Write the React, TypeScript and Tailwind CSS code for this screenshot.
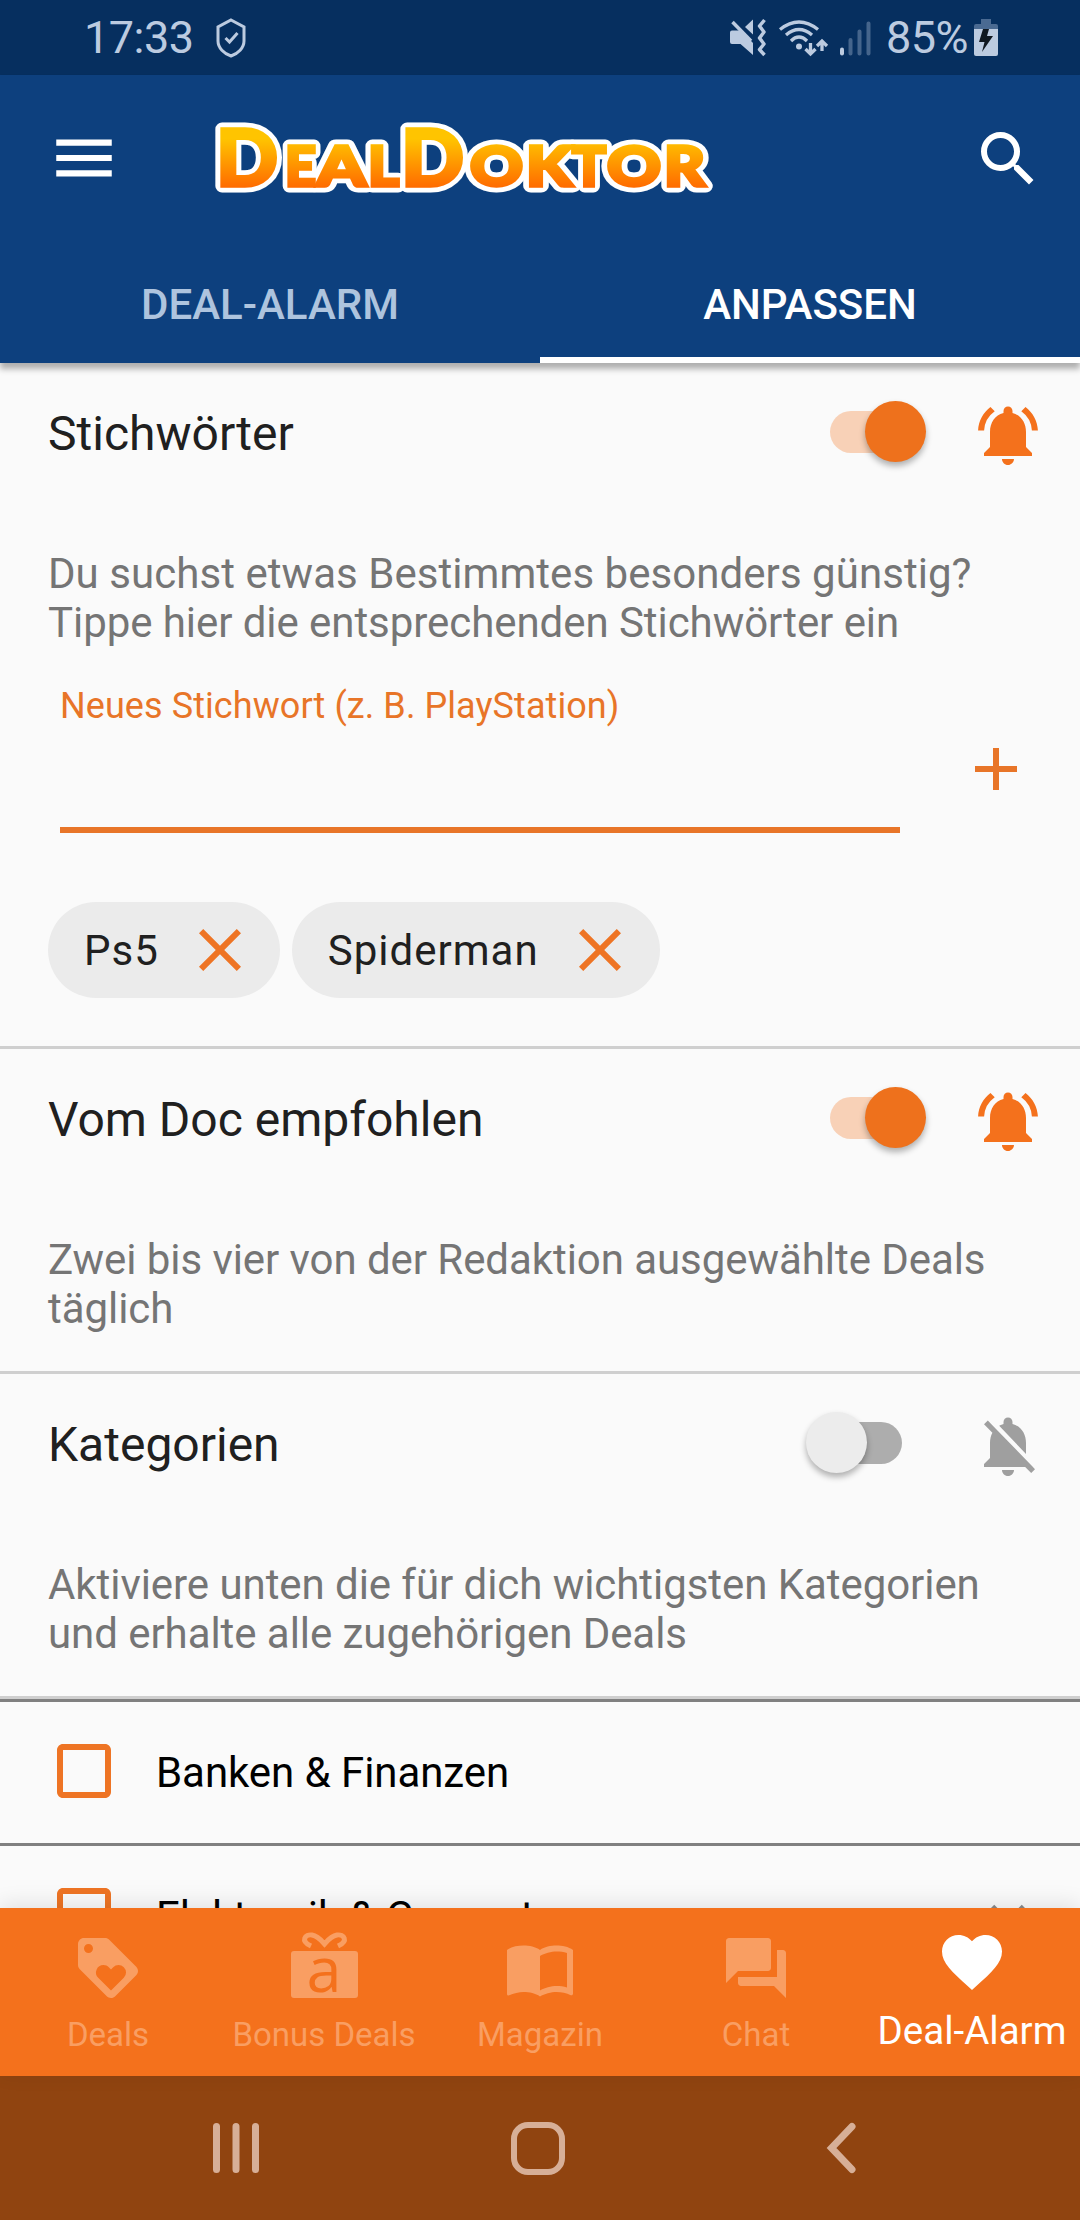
import { useState, type ReactNode } from "react"
import {
  MdAdd,
  MdCheckBoxOutlineBlank,
  MdClose,
  MdExpandMore,
  MdFavorite,
  MdLoyalty,
  MdMenu,
  MdNotificationsActive,
  MdNotificationsOff,
  MdQuestionAnswer,
  MdSearch,
} from "react-icons/md"

const NAV_ITEMS = [
  { label: "Deals", icon: <MdLoyalty size={72} /> },
  { label: "Bonus Deals", icon: <GiftIcon /> },
  { label: "Magazin", icon: <MagazineIcon /> },
  { label: "Chat", icon: <MdQuestionAnswer size={72} /> },
  { label: "Deal-Alarm", icon: <MdFavorite size={72} /> },
]

export default function App() {
  const [keywords, setKeywords] = useState(["Ps5", "Spiderman"])
  const [keywordsOn, setKeywordsOn] = useState(true)
  const [docOn, setDocOn] = useState(true)
  const [categoriesOn, setCategoriesOn] = useState(false)

  return (
    <div className="flex h-[2220px] w-[1080px] flex-col overflow-hidden bg-[#fafafa] font-['Roboto','Liberation_Sans',sans-serif]">
      <StatusBar />
      <Header />

      <main className="min-h-0 flex-1 overflow-hidden">
        <Section
          title="Stichwörter"
          enabled={keywordsOn}
          onToggle={() => setKeywordsOn(!keywordsOn)}
          description={
            <>
              <span className="tracking-[0.05px]">Du suchst etwas Bestimmtes besonders günstig?</span>
              <br />
              Tippe hier die entsprechenden Stichwörter ein
            </>
          }
        >
          <div className="-mt-1.5 flex pl-[60px]">
            <label className="block h-[154px] w-[840px] border-b-[6px] border-[#e87528] pt-[6px] text-[36px] leading-[42px] tracking-[0.08px] text-[#e87528]">
              Neues Stichwort (z. B. PlayStation)
            </label>
            <button type="button" aria-label="Hinzufügen" className="mt-[54px] ml-[60px] h-[72px] text-[#e87528]">
              <MdAdd size={72} />
            </button>
          </div>
          <div className="mt-[69px] mb-12 flex gap-3 pl-12">
            {keywords.map((word) => (
              <Chip key={word} onRemove={() => setKeywords(keywords.filter((k) => k !== word))}>
                {word}
              </Chip>
            ))}
          </div>
        </Section>

        <Section
          title="Vom Doc empfohlen"
          enabled={docOn}
          onToggle={() => setDocOn(!docOn)}
          description="Zwei bis vier von der Redaktion ausgewählte Deals täglich"
        />

        <Section
          title="Kategorien"
          enabled={categoriesOn}
          onToggle={() => setCategoriesOn(!categoriesOn)}
          description="Aktiviere unten die für dich wichtigsten Kategorien und erhalte alle zugehörigen Deals"
        />

        <CategoryRow label="Banken & Finanzen" />
        <CategoryRow label="Elektronik & Computer" expandable />
      </main>

      <BottomNav />
      <SystemNav />
    </div>
  )
}

function StatusBar() {
  return (
    <div className="flex h-[75px] shrink-0 items-center bg-[#062f5f] pr-[82px] pl-[84px] text-[45px] leading-[75px] text-[#bccbe0]">
      <span className="tracking-[-0.5px]">17:33</span>
      <svg className="ml-[21px]" width="32" height="42" viewBox="0 0 32 42" fill="none" stroke="currentColor" strokeWidth="3">
        <path d="M16 3 L29 10 V24 C29 31 23 36.500 16 39 C9 36.500 3 31 3 24 V10 Z" />
        <path d="M10.500 21 L14.500 25 L22.500 16" />
      </svg>

      <div className="ml-auto flex items-center">
        <svg width="111" height="40" viewBox="0 0 111 40" fill="none" stroke="currentColor">
          {/* Muted speaker with vibration */}
          <path d="M3 12.500 H12 L24 25 V37 L11.500 26 H3 Q1 26 1 24 V14.500 Q1 12.500 3 12.500 Z" fill="currentColor" stroke="none" />
          <path d="M24 1.500 V16.500 L16 9 Z" fill="currentColor" stroke="none" />
          <path d="M3.500 4 L22 23" strokeWidth="3.500" />
          <path d="M35.500 2 L30.500 8 L35 14 L30.500 20 L35 26 L30.500 31.500 L35.500 37" strokeWidth="3.500" strokeLinejoin="round" />
          {/* Wifi with traffic arrows */}
          <path d="M51 11.500 Q70 -3.500 89 11.500 M57 17 Q70 6 83 17 M62 23 Q70 15 78 23" strokeWidth="3.300" />
          <circle cx="70" cy="28.500" r="3" fill="currentColor" stroke="none" />
          <path d="M81.500 25 V36 M76.500 31 L81.500 36 L86.500 31 M93 33 V23 M88 28 L93 23 L98 28" strokeWidth="3.300" />
        </svg>
        <svg width="32" height="40" viewBox="0 0 32 40" stroke="currentColor" strokeWidth="4" strokeLinecap="round">
          <path d="M2 31.500 V35.500" />
          <path d="M10.500 22 V35.500 M19.500 13.500 V35.500 M28.500 5.500 V35.500" opacity="0.35" />
        </svg>
        <span className="ml-[14px] tracking-[-0.5px]">85%</span>
        <svg className="ml-[6px]" width="24" height="38" viewBox="0 0 24 38">
          <path d="M7 0 H17 V5 H22 Q24 5 24 7 V10 H0 V7 Q0 5 2 5 H7 Z" fill="#4a6a92" />
          <path d="M0 10 H24 V35 Q24 37 22 37 H2 Q0 37 0 35 Z" fill="currentColor" />
          <path d="M9 10 H15 L13 17 H19 L8 33 L10.500 23 H5 Z" fill="#101820" />
        </svg>
      </div>
    </div>
  )
}

// Left edge and width of every letter in the wordmark
const LOGO_LETTERS = [
  { char: "D", x: 1, width: 62, big: true },
  { char: "E", x: 70, width: 31 },
  { char: "A", x: 102, width: 49 },
  { char: "L", x: 153, width: 31 },
  { char: "D", x: 186, width: 63, big: true },
  { char: "O", x: 255, width: 53 },
  { char: "K", x: 311, width: 46 },
  { char: "T", x: 357, width: 34 },
  { char: "O", x: 392, width: 54 },
  { char: "R", x: 449, width: 41 },
]

function Logo() {
  const letters = LOGO_LETTERS.map((l, i) => (
    <text
      key={i}
      x={l.x}
      y="64"
      fontSize={l.big ? 78 : 55}
      textLength={l.width}
      lengthAdjust="spacingAndGlyphs"
    >
      {l.char}
    </text>
  ))
  return (
    <svg width="500" height="74" viewBox="0 0 500 74" className="overflow-visible font-['Lato','Liberation_Sans',sans-serif] font-black">
      <defs>
        <linearGradient id="logo" gradientUnits="userSpaceOnUse" x1="0" y1="8" x2="0" y2="66">
          <stop offset="0.15" stopColor="#ffc400" />
          <stop offset="1" stopColor="#ff6a00" />
        </linearGradient>
      </defs>
      <g stroke="#fff" strokeWidth="13" strokeLinejoin="round" fill="#fff" aria-hidden="true">{letters}</g>
      <g fill="url(#logo)" stroke="url(#logo)" strokeWidth="3.500">{letters}</g>
    </svg>
  )
}

function Header() {
  return (
    <header className="z-10 h-[288px] shrink-0 bg-[#0d407e] shadow-[0_6px_6px_rgba(0,0,0,0.3)]">
      <div className="flex h-[168px] items-center pr-9 pl-[47px] text-white">
        <button type="button" aria-label="Menü" className="mb-[3px]">
          <MdMenu size={74} />
        </button>
        <div className="ml-[94px]">
          <Logo />
        </div>
        <button type="button" aria-label="Suche" className="ml-auto">
          <MdSearch size={72} />
        </button>
      </div>
      <nav className="flex h-[120px] text-[42px] leading-[123px] font-medium">
        <a className="flex-1 text-center text-[#aec4de]">DEAL-ALARM</a>
        <a className="flex-1 border-b-[6px] border-white text-center text-white">ANPASSEN</a>
      </nav>
    </header>
  )
}

interface SectionProps {
  title: string
  description: ReactNode
  enabled: boolean
  onToggle: () => void
  children?: ReactNode
}

function Section({ title, description, enabled, onToggle, children }: SectionProps) {
  return (
    <section className="border-b-[3px] border-[#cfcfcf]">
      <div className="flex h-[144px] items-center pr-9 pl-12">
        <h2 className="flex-1 pb-[3px] text-[48px] leading-[56px] text-[#202020]">{title}</h2>
        <Switch checked={enabled} onChange={onToggle} />
        {enabled ? (
          <MdNotificationsActive size={72} className="ml-[70px] text-[#f4711c]" />
        ) : (
          <MdNotificationsOff size={72} className="ml-[70px] text-[#9f9f9f]" />
        )}
      </div>
      <p className="mt-[42px] mb-[38px] pr-12 pl-12 text-[42px] leading-[49px] tracking-[-0.06px] text-[#757575]">
        {description}
      </p>
      {children}
    </section>
  )
}

function Switch({ checked, onChange }: { checked: boolean; onChange: () => void }) {
  return (
    <button
      type="button"
      role="switch"
      aria-checked={checked}
      onClick={onChange}
      className={`mb-[7px] flex h-[42px] w-[72px] items-center rounded-full ${
        checked ? "bg-[#f8d1b7]" : "bg-[#adadad]"
      }`}
    >
      <span
        className={`h-[61px] w-[61px] shrink-0 rounded-full shadow-[0_4px_6px_rgba(0,0,0,0.3)] ${
          checked ? "translate-x-[35px] bg-[#ee711c]" : "-translate-x-[24px] bg-[#ececec]"
        }`}
      />
    </button>
  )
}

function Chip({ children, onRemove }: { children: ReactNode; onRemove: () => void }) {
  return (
    <span className="flex h-24 items-center rounded-full bg-[#ebebeb] pr-6 pl-9 text-[42px] tracking-[1px] text-[#202020]">
      {children}
      <button type="button" aria-label="Entfernen" onClick={onRemove} className="ml-[25px] text-[#ee7424]">
        <MdClose size={72} />
      </button>
    </span>
  )
}

function CategoryRow({ label, expandable = false }: { label: string; expandable?: boolean }) {
  return (
    <div className="flex h-[144px] items-center border-t-[3px] border-[#808080] pr-9 pl-12 text-[42px] tracking-[-0.06px] text-black">
      <MdCheckBoxOutlineBlank size={72} className="mb-[3px] text-[#ee7424]" />
      <span className="ml-9">{label}</span>
      {expandable && <MdExpandMore size={72} className="mb-[3px] ml-auto text-[#8a8a8a]" />}
    </div>
  )
}

function GiftIcon() {
  return (
    <svg width="72" height="72" viewBox="0 0 72 72">
      {/* Ribbon loops */}
      <path
        d="M23 14 C12 9 17 2 24 3 C30 4 33 8 36.500 12 C40 8 43 4 49 3 C56 2 61 9 50 14"
        fill="none"
        stroke="currentColor"
        strokeWidth="5"
      />
      <rect x="3" y="19" width="67" height="47" rx="3" fill="currentColor" />
      <text x="36" y="60" textAnchor="middle" fontSize="63" className="fill-[#f4711c] font-['Open_Sans',sans-serif] font-medium">
        a
      </text>
    </svg>
  )
}

function MagazineIcon() {
  return (
    <svg width="72" height="72" viewBox="0 0 24 24" fill="currentColor">
      <path d="M17.500 4.500c-1.950 0-4.050.4-5.500 1.500-1.450-1.100-3.550-1.500-5.500-1.500S2.450 4.900 1 6v14.650c0 .650.730.450.750.450C3.100 20.450 5.050 20 6.500 20c1.950 0 4.050.4 5.500 1.500 1.350-.850 3.800-1.500 5.500-1.500 1.650 0 3.350.3 4.750 1.050.410.210.750-.190.750-.450V6c-1.490-1.120-3.630-1.500-5.500-1.500zm3.500 14c-1.100-.350-2.300-.5-3.500-.5-1.700 0-4.150.650-5.500 1.500V8c1.350-.850 3.800-1.500 5.500-1.500 1.200 0 2.400.150 3.500.5v11.500z" />
    </svg>
  )
}

function BottomNav() {
  return (
    <nav className="z-10 flex h-[168px] shrink-0 bg-[#f4711c] shadow-[0_-4px_20px_rgba(0,0,0,0.1)]">
      {NAV_ITEMS.map(({ label, icon }) => {
        const active = label === "Deal-Alarm"
        return (
          <a
            key={label}
            className={`flex w-[216px] flex-col items-center whitespace-nowrap ${
              active ? "pt-[18px] text-white" : "pt-6 text-[#f99e62]"
            }`}
          >
            {icon}
            <span className={active ? "mt-[10px] text-[38.5px] leading-[46px]" : "mt-[11px] text-[33px] leading-[40px]"}>
              {label}
            </span>
          </a>
        )
      })}
    </nav>
  )
}

function SystemNav() {
  return (
    <div className="flex h-36 shrink-0 items-center bg-[#904410] pl-[212px] text-[#d7af97]">
      <svg width="48" height="52" viewBox="0 0 48 52" stroke="currentColor" strokeWidth="7" strokeLinecap="round">
        <path d="M4.500 4.500 V47.500 M24 4.500 V47.500 M43.500 4.500 V47.500" />
      </svg>
      <span className="ml-[251px] h-[53px] w-[54px] rounded-[17px] border-[6px] border-current" />
      <svg className="ml-[260px]" width="34" height="52" viewBox="0 0 34 52" fill="none" stroke="currentColor" strokeWidth="7">
        <path d="M27 4.500 L6.500 26 L27 47.500" strokeLinecap="round" />
      </svg>
    </div>
  )
}
